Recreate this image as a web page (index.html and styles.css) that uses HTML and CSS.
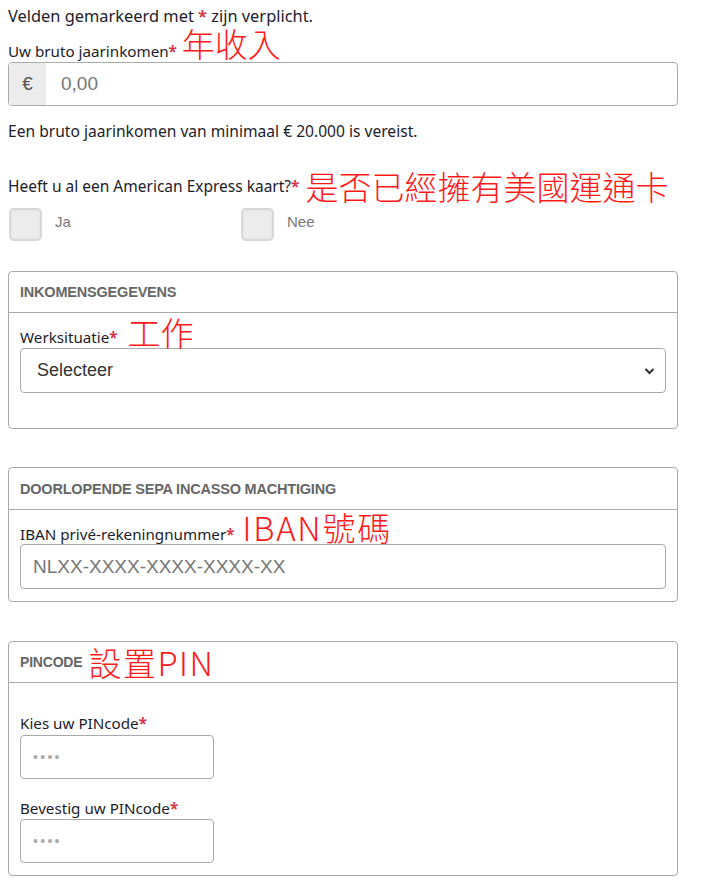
FILE: index.html
```html
<!DOCTYPE html>
<html lang="nl">
<head>
<meta charset="utf-8">
<title>Aanvraag</title>
<link rel="stylesheet" href="styles.css">
</head>
<body>
<div class="page">
  <p class="intro">Velden gemarkeerd met <span class="req">*</span> zijn verplicht.</p>

  <div class="label-row label-row--first">
    <span class="label">Uw bruto jaarinkomen<span class="req">*</span></span>
    <span class="note note--income">年收入</span>
  </div>
  <div class="input-group">
    <span class="addon">€</span>
    <span class="input-text placeholder">0,00</span>
  </div>
  <p class="help">Een bruto jaarinkomen van minimaal € 20.000 is vereist.</p>

  <div class="label-row label-row--amex">
    <span class="label">Heeft u al een American Express kaart?<span class="req">*</span></span>
    <span class="note note--amex">是否已經擁有美國運通卡</span>
  </div>
  <div class="choices">
    <label class="choice"><span class="box"></span><span class="choice-text">Ja</span></label>
    <label class="choice"><span class="box"></span><span class="choice-text">Nee</span></label>
  </div>

  <section class="panel panel--income">
    <header class="panel-head panel-head--41"><span class="panel-title">INKOMENSGEGEVENS</span></header>
    <div class="panel-body">
      <div class="label-row label-row--panel label-row--work">
        <span class="label">Werksituatie<span class="req">*</span></span>
        <span class="note note--work">工作</span>
      </div>
      <div class="select">
        <span class="select-text">Selecteer</span>
        <svg class="chevron" width="11" height="8" viewBox="0 0 11 8"><path d="M1.5 2 L5.5 6 L9.5 2" fill="none" stroke="#333" stroke-width="2"/></svg>
      </div>
    </div>
  </section>

  <section class="panel panel--sepa">
    <header class="panel-head panel-head--42"><span class="panel-title">DOORLOPENDE SEPA INCASSO MACHTIGING</span></header>
    <div class="panel-body">
      <div class="label-row label-row--panel label-row--iban">
        <span class="label">IBAN privé-rekeningnummer<span class="req">*</span></span>
        <span class="note note--iban">IBAN號碼</span>
      </div>
      <div class="text-input">
        <span class="input-text placeholder">NLXX-XXXX-XXXX-XXXX-XX</span>
      </div>
    </div>
  </section>

  <section class="panel panel--pin">
    <header class="panel-head panel-head--41"><span class="panel-title panel-title--small">PINCODE</span><span class="note note--pin">設置PIN</span></header>
    <div class="panel-body">
      <div class="pin-label">Kies uw PINcode<span class="req">*</span></div>
      <div class="pin-input"><span class="dots">••••</span></div>
      <div class="pin-label pin-label--second">Bevestig uw PINcode<span class="req">*</span></div>
      <div class="pin-input"><span class="dots">••••</span></div>
    </div>
  </section>
</div>
</body>
</html>
```

FILE: styles.css
```css
* { box-sizing: border-box; }
html, body { margin: 0; padding: 0; background: #fff; }
body {
  font-family: "Noto Sans", "Liberation Sans", sans-serif;
  color: #1c1c2a;
}
.page {
  width: 670px;
  margin-left: 8px;
}
.intro {
  margin: 0;
  padding-top: 6px;
  font-size: 16.4px;
  line-height: 20px;
}
.req { color: #d6354a; font-weight: 700; }

.label-row {
  display: flex;
  align-items: flex-end;
}
.label {
  font-size: 15.2px;
  line-height: 20px;
}
.note {
  font-family: "Noto Sans CJK TC", "Noto Sans CJK SC", sans-serif;
  font-weight: 300;
  color: #ff1a1a;
  font-size: 33px;
  line-height: 33px;
}

.label-row--first { height: 36px; }
.label-row--first .label { margin-bottom: 1px; }
.note--income { margin-left: 5px; margin-bottom: 2px; }

.input-group {
  display: flex;
  height: 44px;
  border: 1px solid #aaa;
  border-radius: 4px;
  overflow: hidden;
}
.addon {
  width: 37px;
  background: #ececec;
  display: flex;
  align-items: center;
  justify-content: center;
  font-family: "Liberation Sans", sans-serif;
  font-size: 19px;
  color: #555;
}
.input-text {
  font-family: "Liberation Sans", sans-serif;
  font-size: 19px;
  display: flex;
  align-items: center;
}
.input-group .input-text { padding-left: 15px; }
.placeholder { color: #777; }

.help {
  margin: 15px 0 0;
  font-size: 15.6px;
  line-height: 20px;
}

.label-row--amex {
  margin-top: 27px;
  height: 36px;
  align-items: center;
}
.label-row--amex .label { font-size: 15.5px; }
.note--amex { margin-left: 6px; }

.choices {
  display: flex;
  margin-top: 4px;
}
.choice {
  width: 232px;
  display: flex;
  align-items: flex-start;
}
.box {
  width: 33px;
  height: 33px;
  border-radius: 5px;
  background: #ececec;
  border: 2px solid #d8d8d8;
  box-shadow: inset 0 0 2px rgba(0,0,0,0.08);
  margin-left: 1px;
}
.choice-text {
  margin-left: 13px;
  margin-top: 5px;
  line-height: 18px;
  font-family: "Liberation Sans", sans-serif;
  font-size: 15px;
  color: #777;
}

.panel {
  border: 1px solid #aaa;
  border-radius: 4px;
}
.panel--income { margin-top: 30px; }
.panel--sepa { margin-top: 38px; }
.panel--pin { margin-top: 39px; }

.panel-head {
  border-bottom: 1px solid #aaa;
  display: flex;
  align-items: center;
  padding-left: 11px;
}
.panel-head--41 { height: 41px; }
.panel-head--42 { height: 42px; }
.panel-title {
  font-family: "Liberation Sans", sans-serif;
  font-weight: 700;
  font-size: 14.5px;
  color: #666;
  letter-spacing: -0.2px;
}
.panel-title--small { font-size: 14px; }
.note--pin { margin-left: 6px; letter-spacing: 1.5px; }

.panel-body {
  padding: 0 11px;
}
.label-row--work { height: 35px; }
.label-row--work .label { margin-bottom: 1px; }
.note--work { margin-left: 10px; line-height: 32px; }
.label-row--iban { height: 34px; }
.note--iban { margin-left: 8px; letter-spacing: 1.8px; }
.panel--income .panel-body { padding-bottom: 35px; }
.panel--sepa .panel-body { padding-bottom: 12px; }
.panel--pin .panel-body { padding-bottom: 12px; padding-top: 30px; }

.select {
  height: 45px;
  border: 1px solid #aaa;
  border-radius: 4px;
  display: flex;
  align-items: center;
  justify-content: space-between;
  padding: 0 10px 0 16px;
}
.select-text {
  font-family: "Liberation Sans", sans-serif;
  font-size: 18px;
  color: #333;
}
.text-input {
  height: 45px;
  border: 1px solid #aaa;
  border-radius: 4px;
  display: flex;
  align-items: center;
  padding-left: 12px;
}

.pin-label {
  font-size: 15.2px;
  line-height: 20px;
}
.pin-label--second { margin-top: 19px; }
.pin-input {
  width: 194px;
  height: 44px;
  border: 1px solid #aaa;
  border-radius: 4px;
  margin-top: 2px;
  display: flex;
  align-items: center;
  padding-left: 12px;
}
.pin-label--second + .pin-input { margin-top: 1px; }
.dots {
  font-family: "Liberation Sans", sans-serif;
  font-size: 14px;
  color: #aaa;
  letter-spacing: 2.3px;
}
```
